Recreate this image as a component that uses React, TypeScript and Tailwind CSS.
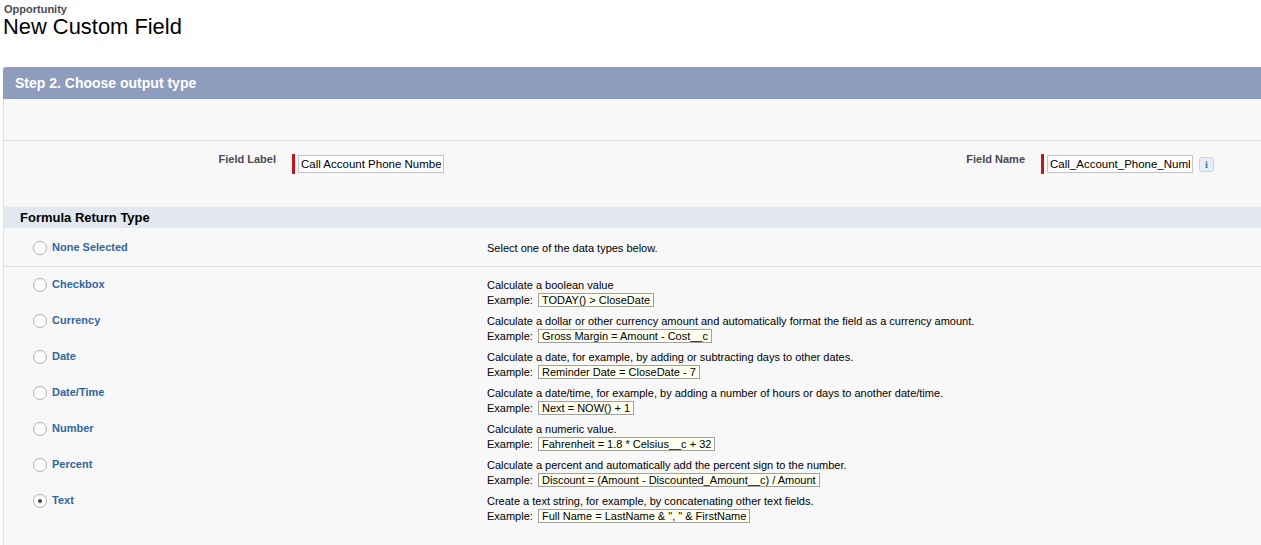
import React from 'react';

const rows = [
  { name: 'Checkbox', desc: 'Calculate a boolean value', example: 'TODAY() > CloseDate' },
  { name: 'Currency', desc: 'Calculate a dollar or other currency amount and automatically format the field as a currency amount.', example: 'Gross Margin = Amount - Cost__c' },
  { name: 'Date', desc: 'Calculate a date, for example, by adding or subtracting days to other dates.', example: 'Reminder Date = CloseDate - 7' },
  { name: 'Date/Time', desc: 'Calculate a date/time, for example, by adding a number of hours or days to another date/time.', example: 'Next = NOW() + 1' },
  { name: 'Number', desc: 'Calculate a numeric value.', example: 'Fahrenheit = 1.8 * Celsius__c + 32' },
  { name: 'Percent', desc: 'Calculate a percent and automatically add the percent sign to the number.', example: 'Discount = (Amount - Discounted_Amount__c) / Amount' },
  { name: 'Text', desc: 'Create a text string, for example, by concatenating other text fields.', example: 'Full Name = LastName & ", " & FirstName', checked: true },
];

const Radio = ({ checked }: { checked?: boolean }) => (
  <span className="w-[14px] h-[14px] rounded-full border border-[#b0b0b0] bg-white flex items-center justify-center shrink-0">
    {checked && <span className="w-[4px] h-[4px] rounded-full bg-[#444]" />}
  </span>
);

const RequiredInput = ({ value }: { value: string }) => (
  <div className="flex items-center gap-[3px]">
    <div className="w-[3px] h-[20px] bg-[#c4161c]" />
    <input
      readOnly
      value={value}
      className="w-[146px] h-[18px] border border-[#c4c4c4] bg-white pl-[2px] pr-[2px] pb-[1px] text-[11.5px] leading-[14px] text-black outline-none"
    />
  </div>
);

export default function App() {
  return (
    <div className="w-[1261px] h-[545px] bg-white overflow-hidden font-['Liberation_Sans',Arial,sans-serif]">
      <div className="h-[67px] pl-[4px] pt-[4px]">
        <div className="text-[11px] leading-[11px] font-bold text-[#4a4a56]">Opportunity</div>
        <h1 className="-ml-px text-[21.9px] leading-[24px] text-black">New Custom Field</h1>
      </div>

      <div className="ml-[3px] h-[478px] bg-[#f8f8f8] border-l border-[#e0e0e0]">
        <div className="-ml-px h-[32px] bg-[#8e9dbe] rounded-tl-[4px] pl-[12px] flex items-center text-[14px] font-bold text-white">
          Step 2. Choose output type
        </div>
        <div className="h-[42px] border-b border-[#dddddd]" />

        <div className="h-[66px] flex pt-[13px]">
          <div className="w-[272px] text-right text-[11px] font-bold text-[#4a4a56] leading-[12px] -mt-[1px]">Field Label</div>
          <div className="ml-[16px]"><RequiredInput value="Call Account Phone Number" /></div>
          <div className="w-[435px] text-right text-[11px] font-bold text-[#4a4a56] leading-[12px] -mt-[1px] ml-[146px]">Field Name</div>
          <div className="ml-[16px]"><RequiredInput value="Call_Account_Phone_Number" /></div>
          <div className="ml-[6px] mt-[3px] w-[15px] h-[15px] rounded-[3px] border border-[#c9d3dd] bg-[#e6eef6] flex items-center justify-center text-[10px] font-bold leading-none text-[#1b6fc2] font-['Liberation_Serif',serif]">i</div>
        </div>

        <div className="h-[21px] bg-[#e3e7ef] pl-[16px] flex items-center text-[13px] font-bold text-black">
          Formula Return Type
        </div>

        <div className="h-[39px] border-b border-[#dddddd] flex pt-[12px]">
          <div className="w-[483px] pl-[29px] flex gap-[5px]">
            <span className="mt-[1px]"><Radio /></span>
            <span className="text-[11px] leading-[13px] font-bold text-[#33659e] mt-[1px]">None Selected</span>
          </div>
          <div className="text-[11px] leading-[16px] text-black">Select one of the data types below.</div>
        </div>

        <div className="pt-[10px]">
          {rows.map((r) => (
            <div key={r.name} className="h-[36px] flex">
              <div className="w-[483px] pl-[29px] pt-[1px] flex gap-[5px]">
                <Radio checked={r.checked} />
                <span className="text-[11px] leading-[13px] font-bold text-[#33659e]">{r.name}</span>
              </div>
              <div className="text-[11px] text-black">
                <div className="leading-[16px]">{r.desc}</div>
                <div className="leading-[14px] flex items-center">
                  <span className="w-[51px]">Example:</span>
                  <span className="h-[14px] border border-[#a0a0a0] bg-[#fffff0] px-[3px] leading-[12px]">{r.example}</span>
                </div>
              </div>
            </div>
          ))}
        </div>
      </div>
    </div>
  );
}
